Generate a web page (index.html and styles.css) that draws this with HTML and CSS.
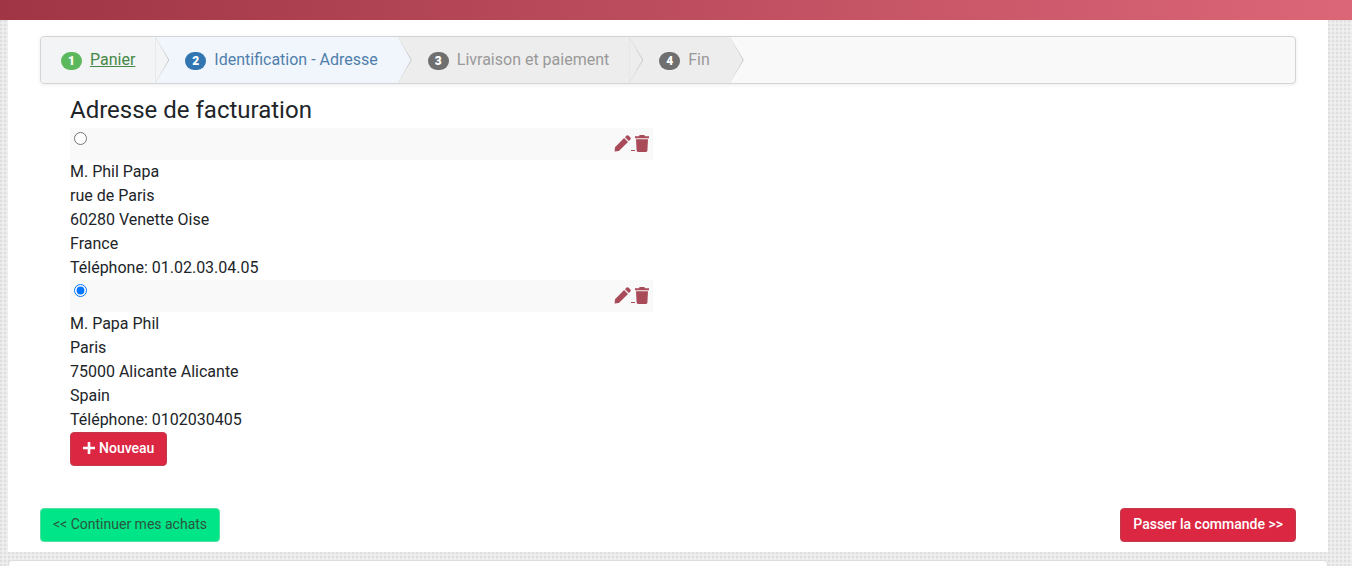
FILE: index.html
```
<!DOCTYPE html>
<html lang="fr">
  <head>
    <meta charset="utf-8">
    <meta name="viewport" content="width=device-width, initial-scale=1">
    <title>Identification - Adresse</title>
    <link rel="stylesheet" href="styles.css">
  </head>
  <body>

    <svg class="sprite" aria-hidden="true">
      <symbol id="pencil" viewBox="0 0 17 17">
        <path d="M1 12.200 10.100 3.100 14 7 4.900 16 .6 16.500Z M11 2.200 12.600.6Q13.500-.2 14.400.6L16.400 2.600Q17.200 3.500 16.400 4.400L14.800 6Z"/>
      </symbol>
      <symbol id="trash" viewBox="0 0 14 17">
        <path d="M0 1.200H4L4.600 0H9.400L10 1.200H14V3.200H0Z M1 4.200H13L12.400 15.600Q12.300 17 11 17H3Q1.700 17 1.600 15.600Z"/>
      </symbol>
      <symbol id="plus" viewBox="0 0 12 12">
        <path d="M4.700 0H7.300V4.700H12V7.300H7.300V12H4.700V7.300H0V4.700H4.700Z"/>
      </symbol>
    </svg>

    <header class="topbar"></header>

    <main class="page">
      <nav class="wizard" aria-label="Étapes">
        <ol class="steps">
          <li class="step complete"><span class="badge">1</span><a href="#">Panier</a></li>
          <li class="step active"><span class="badge">2</span>Identification - Adresse</li>
          <li class="step"><span class="badge">3</span>Livraison et paiement</li>
          <li class="step"><span class="badge">4</span>Fin</li>
        </ol>
      </nav>

      <form action="#">
        <section class="addresses">
          <h1>Adresse de facturation</h1>

          <div class="address-head">
            <input type="radio" name="address" id="address1">
            <div class="actions">
              <a href="#" aria-label="Modifier"><svg class="icon-pencil"><use href="#pencil"/></svg> </a><a href="#" aria-label="Supprimer"><svg class="icon-trash"><use href="#trash"/></svg></a>
            </div>
          </div>
          <label class="address" for="address1">
            M. Phil Papa<br>
            rue de Paris<br>
            60280 Venette Oise<br>
            France<br>
            Téléphone: 01.02.03.04.05
          </label>

          <div class="address-head">
            <input type="radio" name="address" id="address2" checked>
            <div class="actions">
              <a href="#" aria-label="Modifier"><svg class="icon-pencil"><use href="#pencil"/></svg> </a><a href="#" aria-label="Supprimer"><svg class="icon-trash"><use href="#trash"/></svg></a>
            </div>
          </div>
          <label class="address" for="address2">
            M. Papa Phil<br>
            Paris<br>
            75000 Alicante Alicante<br>
            Spain<br>
            Téléphone: 0102030405
          </label>

          <button type="button" class="btn btn-red"><svg class="icon-plus"><use href="#plus"/></svg>Nouveau</button>
        </section>

        <div class="buttons">
          <button type="button" class="btn btn-green">&lt;&lt; Continuer mes achats</button>
          <button type="submit" class="btn btn-red">Passer la commande &gt;&gt;</button>
        </div>
      </form>
    </main>

    <footer class="footer"></footer>

  </body>
</html>
```

FILE: styles.css
```
* {
  box-sizing: border-box;
}

body {
  margin: 0;
  overflow-x: hidden;
  font-family: Roboto, "Liberation Sans", sans-serif;
  font-size: 16px;
  line-height: 24px;
  color: #212529;
  background-color: #ebebeb;
  background-image: radial-gradient(circle at 1px 1px, #dfdfdf 1px, transparent 1px), radial-gradient(circle at 3px 3px, #f0f0f0 1px, transparent 1px);
  background-size: 4px 4px;
}

.sprite {
  display: none;
}

.topbar {
  height: 20px;
  background: linear-gradient(90deg, #9f3545, #db6678);
}

.page {
  margin: 0 24px 0 8px;
  padding: 16px 32px 10px;
  background: #fff;
}

/* steps */

.wizard {
  height: 48px;
  overflow: hidden;
  border: 1px solid #d4d4d4;
  border-radius: 4px;
  background: #f9f9f9;
  box-shadow: 0 1px 4px rgba(0, 0, 0, 0.07);
}

.steps {
  display: flex;
  margin: 0;
  padding: 0;
  list-style: none;
}

.step {
  position: relative;
  display: flex;
  align-items: center;
  height: 46px;
  padding: 0 20px 0 30px;
  color: #999;
  background: #ededed;
}

.step:first-child {
  padding-left: 20px;
}

/* arrow on the right side, the ::before is its border */
.step::before,
.step::after {
  content: "";
  position: absolute;
  top: 0;
  left: 100%;
  z-index: 1;
  width: 14px;
  height: 46px;
  background: #c8c8c8;
  clip-path: polygon(0 0, 100% 50%, 0 100%);
}

.step::after {
  width: 13px;
  background: #ededed;
}

.step.complete,
.step.complete::after {
  background: #f3f4f5;
}

.step.active,
.step.active::after {
  background: #f1f6fc;
}

.step.active {
  color: #4f7fab;
}

.step a {
  color: #468847;
}

.badge {
  width: 21px;
  height: 18px;
  margin: 2px 8px 0 0;
  border-radius: 9px;
  font-size: 12px;
  font-weight: 900;
  line-height: 18px;
  text-align: center;
  color: #fff;
  background: #6f6f6f;
}

.complete .badge {
  background: #5cb85c;
}

.active .badge {
  background: #3276b1;
}

/* addresses */

.addresses {
  width: 50%;
  padding: 12px 15px 0 30px;
}

h1 {
  margin: 0 0 4px;
  font-size: 24px;
  font-weight: 400;
  line-height: 28px;
}

.address-head {
  display: flex;
  align-items: flex-start;
  justify-content: space-between;
  height: 32px;
  padding: 4px;
  background: #f9f9f9;
}

.address-head input {
  width: 13px;
  height: 13px;
  margin: 0;
}

.address {
  display: block;
}

.actions a {
  color: #a94a59;
}

.actions svg {
  height: 17px;
  vertical-align: -3px;
  fill: #a94a59;
}

.icon-pencil {
  width: 17px;
}

.icon-trash {
  width: 14px;
}

/* buttons */

.btn {
  padding: 4px 12px 6px;
  border: 1px solid #c23a4c;
  border-radius: 4px;
  font-family: inherit;
  font-size: 14px;
  line-height: 22px;
  cursor: pointer;
}

.btn-red {
  font-weight: 500;
  color: #fff;
  background: #dc2743;
}

.btn-green {
  color: #2b5540;
  border-color: #4fe0a0;
  background: #00e588;
}

.icon-plus {
  width: 12px;
  height: 12px;
  margin-right: 4px;
  vertical-align: -1px;
  fill: #fff;
}

.buttons {
  display: flex;
  justify-content: space-between;
  margin-top: 42px;
}

.footer {
  height: 40px;
  margin: 8px 24px 0 8px;
  border: 1px solid #ddd;
  border-radius: 4px;
  background: #fff;
}
```
